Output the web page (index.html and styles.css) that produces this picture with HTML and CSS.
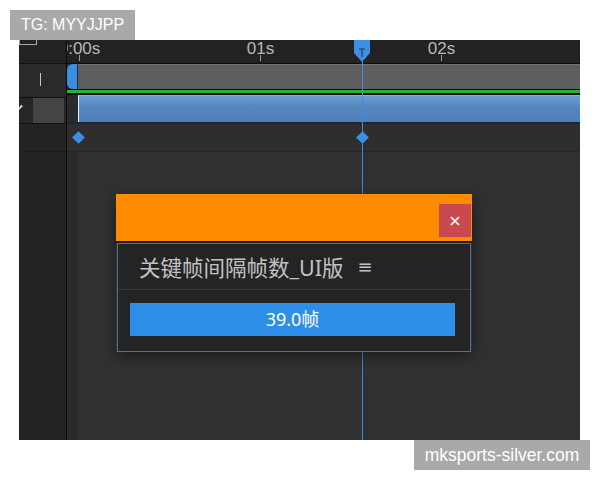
FILE: index.html
```html
<!DOCTYPE html>
<html lang="zh">
<head>
  <meta charset="UTF-8" />
  <title>关键帧间隔帧数</title>
  <link rel="stylesheet" href="styles.css">
</head>
<body>

  <div class="screen">
    <!-- left layer column -->
    <div class="side">
      <div class="side-ruler"><span class="side-icon"></span></div>
      <div class="side-row1"><span class="side-bar"></span></div>
      <div class="side-row2">
        <span class="check"></span>
        <span class="swatch"></span>
      </div>
      <div class="side-row3"></div>
    </div>

    <!-- timeline -->
    <div class="timeline">
      <div class="ruler">
        <div class="ticks">
          <div class="tick"><span>0:00s</span><i></i></div>
          <div class="tick"><span>01s</span><i></i></div>
          <div class="tick"><span>02s</span><i></i></div>
        </div>
      </div>
      <div class="track-row">
        <span class="handle"></span>
        <span class="track"></span>
      </div>
      <div class="green-line"></div>
      <div class="clip-row"><span class="clip"></span></div>
      <div class="key-row">
        <span class="key key-a"></span>
        <span class="key key-b"></span>
      </div>

      <div class="playhead">
        <svg class="playhead-head" width="18" height="22" viewBox="0 0 18 22">
          <path d="M1 0 H17 V13 L9 22 L1 13 Z" fill="#3c8fe3"/>
          <path d="M6 9 H12 M9 9 V17" stroke="#1b3f66" stroke-width="1.2"/>
        </svg>
      </div>
    </div>

    <!-- floating script panel -->
    <div class="dialog">
      <div class="dialog-head">
        <button class="close">×</button>
      </div>
      <div class="dialog-body">
        <div class="dialog-title">关键帧间隔帧数_UI版 <span class="menu">≡</span></div>
        <div class="dialog-content">
          <div class="value-btn">39.0帧</div>
        </div>
      </div>
    </div>
  </div>

  <div class="mark mark-top">TG: MYYJJPP</div>
  <div class="mark mark-bottom">mksports-silver.com</div>

</body>
</html>
```

FILE: styles.css
```css
/* Reset */
* {
  margin: 0;
  padding: 0;
  box-sizing: border-box;
}

body {
  background: #fff;
  font-family: "Noto Sans", "Noto Sans CJK SC", sans-serif;
  width: 600px;
  height: 480px;
  position: relative;
  overflow: hidden;
}

/* Dark editor window */
.screen {
  position: relative;
  margin: 40px 0 0 19px;
  width: 561px;
  height: 400px;
  display: grid;
  grid-template-columns: 48px 1fr;
  background: #313131;
  overflow: hidden;
}

/* Left column */
.side {
  background: #232323;
  border-right: 1px solid #0c0c0c;
  display: flex;
  flex-direction: column;
}
.side-ruler {
  height: 24px;
  border-bottom: 1px solid #111;
  background: #222;
}
.side-icon {
  display: block;
  width: 18px;
  height: 5px;
  border: 1px solid #aaa;
  border-top: none;
}
.side-row1 {
  height: 34px;
  background: #2a2a2a;
  border-bottom: 1px solid #0e0e0e;
  padding: 9px 0 0 21px;
}
.side-bar {
  display: block;
  width: 1px;
  height: 13px;
  background: #c4c4c4;
}
.side-row2 {
  height: 25px;
  display: flex;
  background: #262626;
}
/* only the tail of the tick mark shows at the left edge */
.check {
  position: relative;
  width: 14px;
  overflow: hidden;
}
.check::after {
  content: "";
  position: absolute;
  left: -3px;
  top: 9px;
  width: 7px;
  height: 1.5px;
  background: #cfcfcf;
  transform: rotate(-45deg);
}
.swatch {
  width: 31px;
  background: #444;
}
.side-row3 {
  height: 29px;
  border-top: 1px solid #111;
  border-bottom: 1px solid #1c1c1c;
}

/* Timeline */
.timeline {
  position: relative;
  overflow: hidden;
  background: linear-gradient(to right, #2a2a2a 11px, #313131 11px);
}
.ruler {
  height: 24px;
  background: #222;
  border-bottom: 1px solid #0d0d0d;
  overflow: hidden;
}
.ticks {
  display: flex;
  margin-left: -78px;
}
.tick {
  flex: 0 0 181px;
  display: flex;
  flex-direction: column;
  align-items: center;
}
.tick span {
  font-family: "Liberation Sans", Arial, sans-serif;
  font-size: 17px;
  line-height: 17px;
  color: #b8b8b8;
}
.tick i {
  width: 1px;
  height: 6px;
  background: #9a9a9a;
  margin-top: -2px;
}

.track-row {
  height: 25px;
  display: flex;
}
.handle {
  width: 10px;
  margin-right: 1px;
  background: #3a8ee6;
  border-radius: 6px 0 0 6px;
}
.track {
  flex: 1;
  background: #5d5d5d;
  border-top: 1px solid #717171;
}
.green-line {
  height: 6px;
  background: #27b23b;
  border-top: 1px solid #0a0a0a;
  border-bottom: 2px solid #0e0e0e;
}
.clip-row {
  height: 29px;
  display: flex;
  padding-left: 11px;
  border-bottom: 2px solid #1f2831;
}
.clip {
  flex: 1;
  background: linear-gradient(to bottom, #6d9dd0, #5688c0 40%, #4d80b9);
  border-left: 1px solid #e8eef5;
  border-top: 1px solid #8db1d8;
}
.key-row {
  position: relative;
  height: 28px;
  background: #2e2e2e;
  border-bottom: 1px solid #242424;
}
.key {
  position: absolute;
  top: 9px;
  width: 9px;
  height: 9px;
  background: #3c8fe6;
  transform: rotate(45deg);
}
.key-a { left: 7px; }
.key-b { left: 291px; }

.playhead {
  position: absolute;
  left: 295px;
  top: 0;
  bottom: 0;
  width: 1px;
  background: #3c8ee0;
}
.playhead-head {
  position: absolute;
  left: -9px;
  top: 0;
}

/* Floating dialog */
.dialog {
  position: absolute;
  left: 97px;
  top: 154px;
  width: 356px;
  box-shadow: 0 4px 14px rgba(0, 0, 0, 0.45);
}
.dialog-head {
  height: 49px;
  background: #ff8c00;
  display: flex;
  justify-content: flex-end;
  padding: 10px 1px 0 0;
  border-bottom: 2px solid #1e1e1e;
}
.close {
  width: 32px;
  height: 33px;
  border: none;
  background: #c8494f;
  color: #fff;
  font-family: "DejaVu Sans", sans-serif;
  font-size: 16px;
  line-height: 33px;
}
.dialog-body {
  margin: 0 1px;
  background: #242424;
  border: 1px solid #4f7394;
}
.dialog-title {
  height: 46px;
  padding-left: 21px;
  display: flex;
  align-items: center;
  color: #c2c2c2;
  font-size: 21.5px;
  border-bottom: 1px solid #3b3b3b;
}
.menu {
  margin-left: 14px;
  font-family: "DejaVu Sans", sans-serif;
  font-size: 18px;
}
.dialog-content {
  padding: 13px 15px 15px 12px;
}
.value-btn {
  height: 33px;
  background: #2d8ee8;
  color: #fff;
  font-size: 18px;
  line-height: 33px;
  text-align: center;
}

/* Watermarks */
.mark {
  position: absolute;
  height: 30px;
  background: #a9a9a9;
  color: #fff;
  font-family: "Liberation Sans", Arial, sans-serif;
  line-height: 30px;
  text-align: center;
}
.mark-top {
  left: 10px;
  top: 10px;
  width: 125px;
  font-size: 16px;
}
.mark-bottom {
  left: 414px;
  top: 440px;
  width: 176px;
  font-size: 17.5px;
}
```
